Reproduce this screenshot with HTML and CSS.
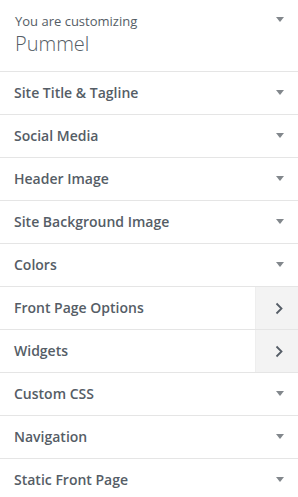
FILE: index.html
```html
<!DOCTYPE html>
<html lang="en">
<head>
    <meta charset="UTF-8">
    <meta name="viewport" content="width=device-width, initial-scale=1.0">
    <title>Customizer</title>
    <link rel="stylesheet" href="styles.css">
</head>
<body>
    <div class="customizer">
        <div class="info">
            <div class="info-text">
                <span class="preview-notice">You are customizing</span>
                <span class="theme-name">Pummel</span>
            </div>
            <span class="caret"></span>
        </div>

        <ul class="sections">
            <li class="section"><span>Site Title &amp; Tagline</span><span class="caret"></span></li>
            <li class="section"><span>Social Media</span><span class="caret"></span></li>
            <li class="section"><span>Header Image</span><span class="caret"></span></li>
            <li class="section"><span>Site Background Image</span><span class="caret"></span></li>
            <li class="section"><span>Colors</span><span class="caret"></span></li>
            <li class="section panel"><span>Front Page Options</span><span class="go"><svg width="8" height="13" viewBox="0 0 8 13"><path d="M1.5 1.5 L6.5 6.5 L1.5 11.5" fill="none" stroke="#555d66" stroke-width="1.8"/></svg></span></li>
            <li class="section panel"><span>Widgets</span><span class="go"><svg width="8" height="13" viewBox="0 0 8 13"><path d="M1.5 1.5 L6.5 6.5 L1.5 11.5" fill="none" stroke="#555d66" stroke-width="1.8"/></svg></span></li>
            <li class="section"><span>Custom CSS</span><span class="caret"></span></li>
            <li class="section"><span>Navigation</span><span class="caret"></span></li>
            <li class="section"><span>Static Front Page</span><span class="caret"></span></li>
        </ul>
    </div>
</body>
</html>
```

FILE: styles.css
```css
* {
    margin: 0;
    padding: 0;
    box-sizing: border-box;
}

body {
    font-family: "Open Sans", "Liberation Sans", sans-serif;
    background: #fff;
    color: #555d66;
    width: 298px;
    height: 497px;
    overflow: hidden;
}

.info {
    height: 71px;
    display: flex;
    justify-content: space-between;
    padding: 11px 14px 0 15px;
}

.info-text {
    display: flex;
    flex-direction: column;
}

.preview-notice {
    font-size: 13px;
    line-height: 20px;
    color: #555d66;
}

.theme-name {
    font-size: 20px;
    font-weight: 300;
    line-height: 26px;
    color: #555d66;
}

.info .caret {
    margin-top: 6px;
}

.caret {
    width: 0;
    height: 0;
    border-left: 4px solid transparent;
    border-right: 4px solid transparent;
    border-top: 5px solid #82878c;
}

.sections {
    list-style: none;
}

.section {
    height: 43px;
    border-top: 1px solid #e5e5e5;
    display: flex;
    align-items: center;
    justify-content: space-between;
    padding: 0 14px 2px 14px;
    font-size: 14px;
    font-weight: 600;
    color: #555d66;
}

.section.panel {
    padding: 0 0 0 14px;
    align-items: stretch;
}

.section.panel > span:first-child {
    display: flex;
    align-items: center;
    padding-bottom: 2px;
}

.go {
    width: 43px;
    background: #f3f3f3;
    border-left: 1px solid #eee;
    display: flex;
    align-items: center;
    justify-content: flex-end;
    padding-right: 15px;
}
```
